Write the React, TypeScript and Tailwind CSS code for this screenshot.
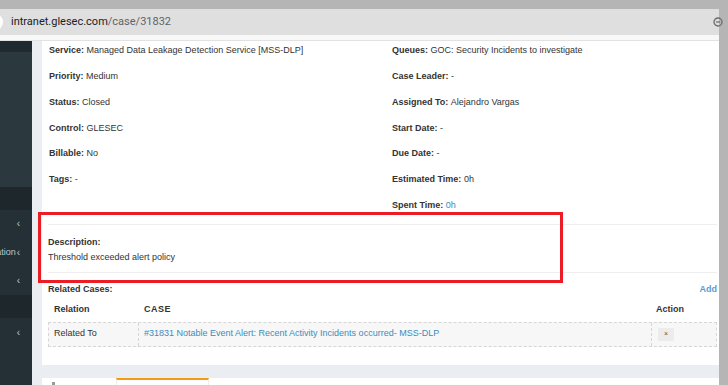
import React from "react";

const Chev = () => <span className="text-[10px] leading-none text-[#b8c7ce]">‹</span>;

function Row({ label, value, blue }: { label: string; value: string; blue?: boolean }) {
  return (
    <div className="h-[25.8px] flex items-center whitespace-nowrap">
      <span className="font-bold">{label}</span>
      <span className={blue ? "text-[#3c8dbc]" : ""}>&nbsp;{value}</span>
    </div>
  );
}

export default function App() {
  return (
    <div
      className="w-[728px] h-[385px] overflow-hidden bg-[#b5b5b5] flex flex-col relative"
      style={{ fontFamily: '"Liberation Sans", Arial, sans-serif' }}
    >
      <div className="h-[9px] shrink-0" />
      <div className="flex flex-1 min-h-0">
        <div className="w-[719px] flex flex-col">
          {/* address bar */}
          <div className="h-[26px] bg-[#dfdfdf] relative flex items-center shrink-0">
            <div className="absolute left-[-15px] top-[4px] w-[18px] h-[18px] rounded-full bg-white" />
            <div
              className="pl-[11px] text-[11px] text-[#202124]"
              style={{ fontFamily: "Roboto, 'Noto Sans', sans-serif" }}
            >
              intranet.glesec.com<span className="text-[#5f6368]">/case/31832</span>
            </div>
            <svg className="absolute right-[-4px] top-[8px]" width="10" height="10" viewBox="0 0 10 10">
              <circle cx="5" cy="5" r="4" fill="none" stroke="#6b6b6b" strokeWidth="1.3" />
              <line x1="3" y1="5" x2="7" y2="5" stroke="#6b6b6b" strokeWidth="1.2" />
            </svg>
          </div>
          <div className="h-[6px] bg-[#f8f8f8] border-b border-[#e2e2e2] shrink-0" />
          {/* body */}
          <div className="flex flex-1 min-h-0">
            {/* sidebar */}
            <div className="w-[32px] flex flex-col shrink-0 bg-[#243036]">
              <div className="h-[11px] bg-[#1f2a30]" />
              <div className="h-[135px] bg-[#2b383e]" />
              <div className="h-[23px] bg-[#1d272c]" />
              <div className="h-[28px] flex items-center justify-end pr-[12px]"><Chev /></div>
              <div className="h-[29px] flex items-center justify-end pr-[12px] text-[9px] text-[#b8c7ce] whitespace-nowrap">
                <span className="mr-[1px]">ation</span><Chev />
              </div>
              <div className="h-[28px] flex items-center justify-end pr-[12px]"><Chev /></div>
              <div className="h-[23px] bg-[#1d272c]" />
              <div className="h-[29px] flex items-center justify-end pr-[12px]"><Chev /></div>
            </div>
            {/* content */}
            <div className="flex-1 bg-[#eaedf1] pl-[10px] flex flex-col text-[9px] text-[#333]">
              <div className="bg-white h-[324px] shrink-0 pl-[6px] pr-[2px] flex flex-col">
                <div className="flex -mt-[3px]">
                  <div className="w-[344px] pl-[1px]">
                    <Row label="Service:" value="Managed Data Leakage Detection Service [MSS-DLP]" />
                    <Row label="Priority:" value="Medium" />
                    <Row label="Status:" value="Closed" />
                    <Row label="Control:" value="GLESEC" />
                    <Row label="Billable:" value="No" />
                    <Row label="Tags:" value="-" />
                  </div>
                  <div className="flex-1">
                    <Row label="Queues:" value="GOC: Security Incidents to investigate" />
                    <Row label="Case Leader:" value="-" />
                    <Row label="Assigned To:" value="Alejandro Vargas" />
                    <Row label="Start Date:" value="-" />
                    <Row label="Due Date:" value="-" />
                    <Row label="Estimated Time:" value="0h" />
                    <Row label="Spent Time:" value="0h" blue />
                  </div>
                </div>
                <div className="mt-[5px] border-t border-[#eeeeee] pt-[11px] pb-[9px] border-b">
                  <div className="font-bold leading-[12px]">Description:</div>
                  <div className="leading-[12px] mt-[3px]">Threshold exceeded alert policy</div>
                </div>
                <div className="flex justify-between items-center h-[16px] mt-[9px]">
                  <span className="font-bold">Related Cases:</span>
                  <span className="text-[#5b9bd5] font-bold">Add</span>
                </div>
                <div className="mt-[1px]">
                  <div className="flex h-[23px] items-center font-bold">
                    <div className="w-[90px] pl-[6px]">Relation</div>
                    <div className="w-[513px] pl-[6px] tracking-[0.5px]">CASE</div>
                    <div className="flex-1 pl-[5px]">Action</div>
                  </div>
                  <div className="flex h-[25px] bg-[#f7f7f7] border border-dashed border-[#d6d6d6]">
                    <div className="w-[90px] pl-[5px] flex items-center border-r border-dashed border-[#d6d6d6]">Related To</div>
                    <div className="w-[513px] pl-[5px] flex items-center border-r border-dashed border-[#d6d6d6] text-[#3c8dbc]">
                      #31831 Notable Event Alert: Recent Activity Incidents occurred- MSS-DLP
                    </div>
                    <div className="flex-1 pl-[6px] flex items-center">
                      <div className="w-[16px] h-[13px] bg-[#ececec] rounded-[1px] flex items-center justify-center text-[7px] text-[#555]">×</div>
                    </div>
                  </div>
                </div>
              </div>
              <div className="h-[13px] shrink-0" />
              <div className="bg-white flex-1 flex relative">
                <div className="w-[74px] pl-[10px] pt-[4px]">
                  <div className="w-[3px] h-[3px] bg-[#999]" />
                </div>
                <div className="w-[93px] border-t-2 border-[#f39c12] border-x border-x-[#eee]" />
              </div>
            </div>
          </div>
        </div>
      </div>
      {/* red annotation box */}
      <div className="absolute left-[38px] top-[212px] w-[525px] h-[71px] border-[3px] border-[#ec1c24]" />
    </div>
  );
}
